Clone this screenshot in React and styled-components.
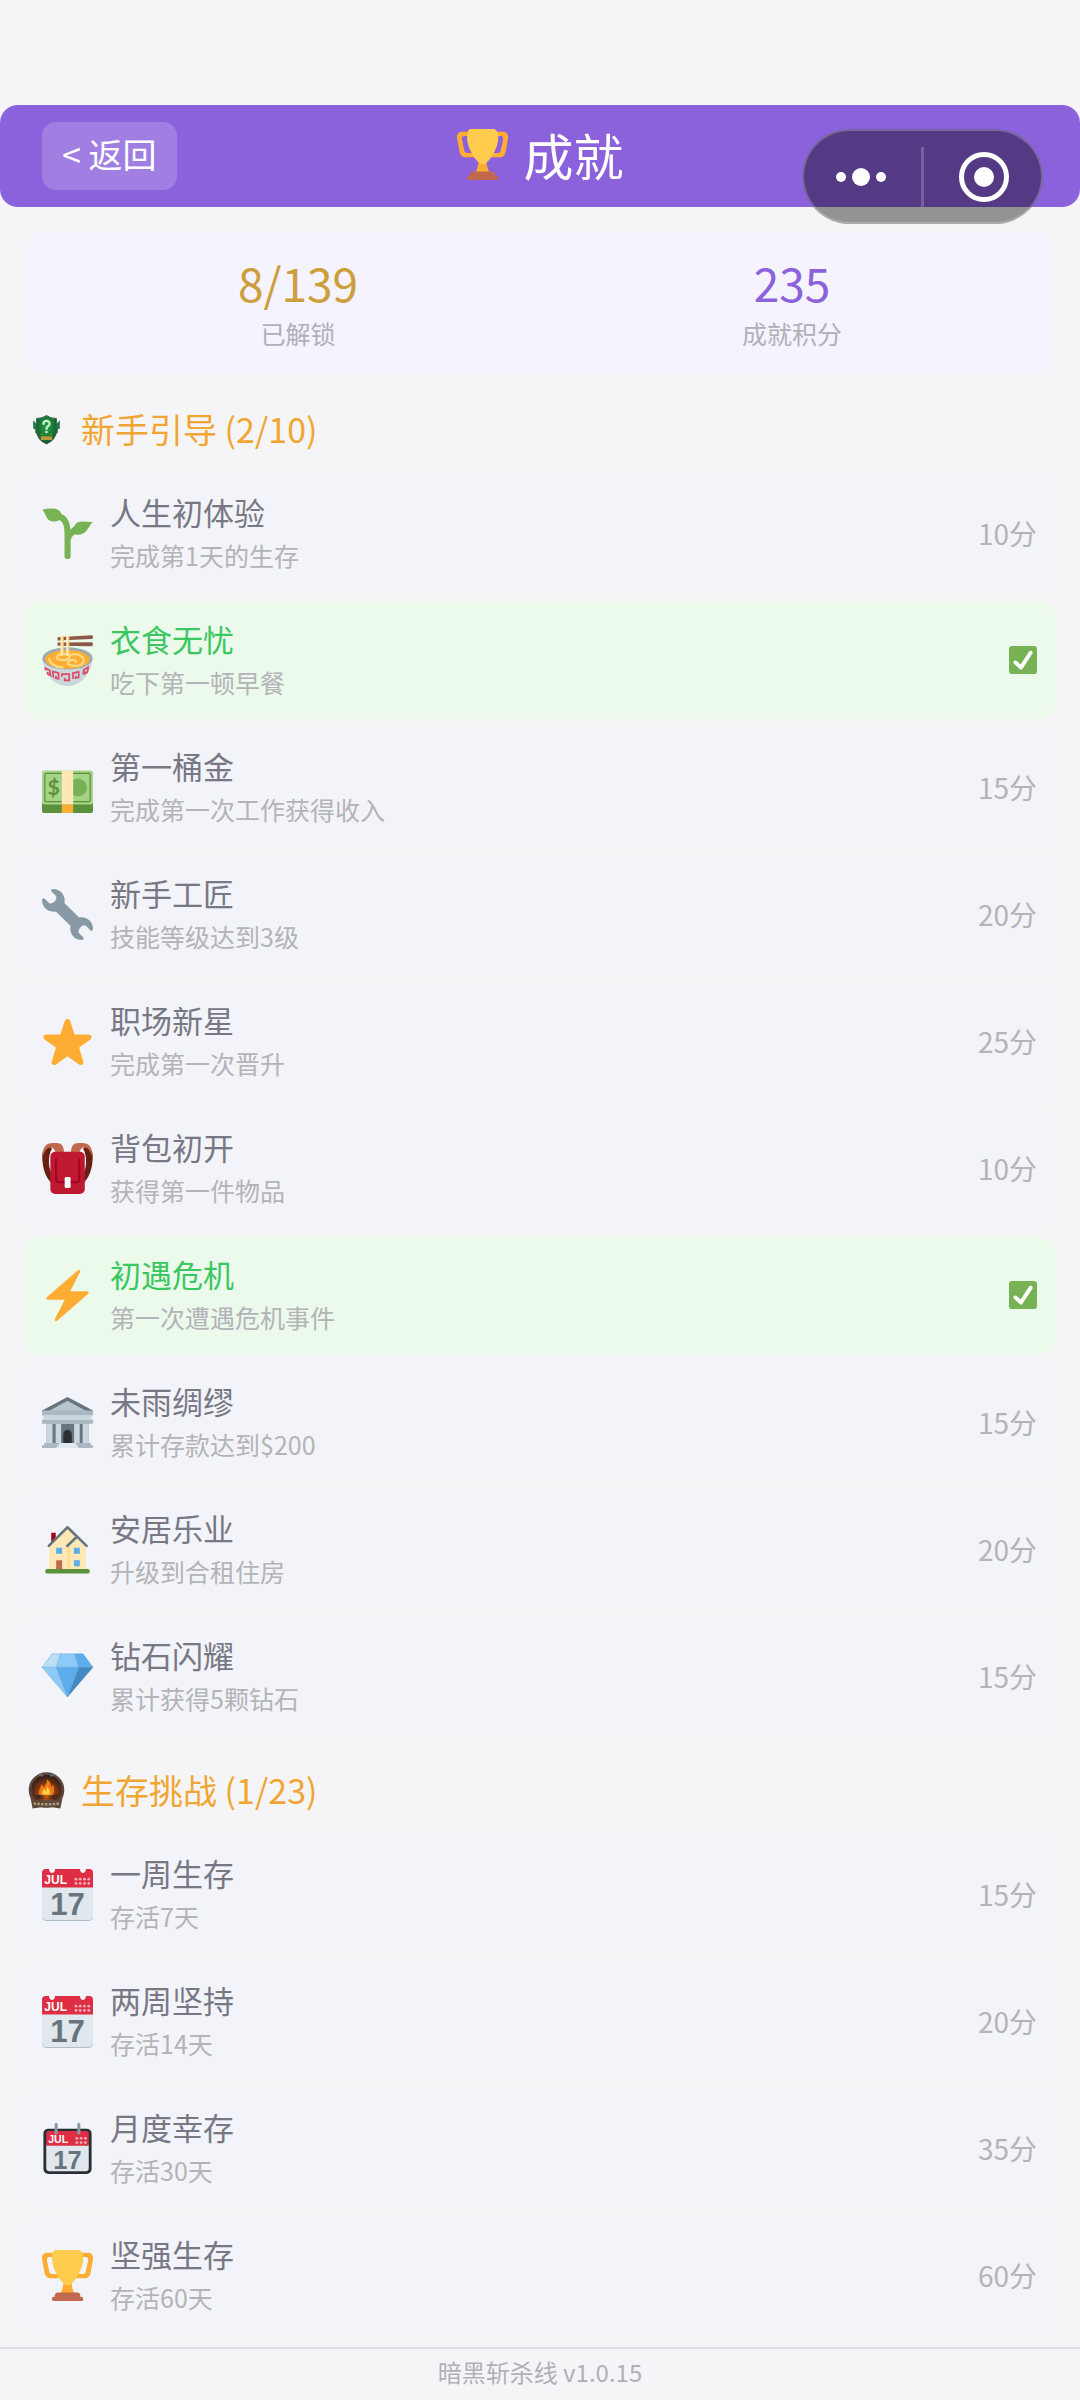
import styled, { createGlobalStyle } from "styled-components";

const GlobalStyle = createGlobalStyle`
	* {
		box-sizing: border-box;
	}
	body {
		margin: 0;
		background-color: #f5f5f7;
		font-family: "Noto Sans CJK SC", sans-serif;
	}
	h1, h2, h3, p, ul, dl, dd {
		margin: 0;
		padding: 0;
		font-weight: 400;
	}
	button {
		font: inherit;
		color: inherit;
		border: none;
		cursor: pointer;
	}
`;

const Page = styled.div`
	display: flex;
	flex-direction: column;
	min-height: 100vh;
	padding-top: 105px;
`;

const Header = styled.header`
	position: relative;
	display: grid;
	grid-template-columns: 1fr auto 1fr;
	align-items: center;
	height: 102px;
	padding: 0 42px;
	border-radius: 18px;
	background-color: #8c62dc;
	color: white;
`;

const BackButton = styled.button`
	justify-self: start;
	height: 68px;
	padding: 0 20px 4px;
	border-radius: 14px;
	background-color: rgba(255, 255, 255, 0.18);
	font-size: 34px;
	line-height: 64px;
	white-space: nowrap;
`;

const PageTitle = styled.h1`
	display: flex;
	align-items: center;
	gap: 16px;
	padding-bottom: 4px;
	font-size: 50px;
	line-height: 60px;
`;

const Capsule = styled.div`
	position: absolute;
	top: 24px;
	right: 37px;
	display: flex;
	gap: 3px;
	align-items: center;
	width: 241px;
	height: 95px;
	border: 2px solid rgba(255, 255, 255, 0.22);
	border-radius: 48px;
	background-color: rgba(0, 0, 0, 0.4);
`;

const CapsuleButton = styled.button`
	display: flex;
	flex: 1;
	justify-content: center;
	padding: 0;
	background: none;
`;

const CapsuleDivider = styled.span`
	width: 3px;
	height: 60px;
	background-color: rgba(255, 255, 255, 0.2);
`;

const Stats = styled.dl`
	display: flex;
	justify-content: space-around;
	margin: 25px 28px 0;
	padding: 18px 18px 22px;
	border-radius: 16px;
	background-color: #f5f3fd;
	text-align: center;
`;

const Stat = styled.div`
	display: flex;
	flex-direction: column-reverse;
`;

const StatValue = styled.dd`
	color: ${(props) => props.$color};
	font-size: 46px;
	line-height: 64px;
`;

const StatLabel = styled.dt`
	color: #b0b0b8;
	font-size: 25px;
	line-height: 38px;
`;

const Main = styled.main`
	flex: 1;
	padding: 0 24px;
`;

const SectionTitle = styled.h2`
	display: flex;
	align-items: center;
	gap: 16px;
	margin: 31px 4px 22px;
	color: #f1a533;
	font-size: 34px;
	line-height: 48px;
`;

const List = styled.ul`
	display: flex;
	flex-direction: column;
	gap: 10px;
	list-style: none;
`;

const Item = styled.li`
	display: flex;
	align-items: center;
	gap: 17px;
	padding: 15px 19px 16px 18px;
	border-radius: 16px;
	background-color: ${(props) => (props.$done ? "#ebfaeb" : "#f3f4f9")};
`;

const ItemText = styled.div`
	flex: 1;
`;

const ItemName = styled.h3`
	color: ${(props) => (props.$done ? "#3bc75f" : "#787885")};
	font-size: 31px;
	line-height: 44px;
`;

const ItemDesc = styled.p`
	color: #b3b3b8;
	font-size: 25px;
	line-height: 42px;
`;

const Points = styled.span`
	color: #b3b3b8;
	font-size: 28px;
	line-height: 40px;
`;

const Footer = styled.footer`
	padding-bottom: 5px;
	border-top: 2px solid #dcdce6;
	color: #b0b0b8;
	font-size: 24px;
	line-height: 46px;
	text-align: center;
`;

const Emoji = styled.svg.attrs({ viewBox: "0 0 36 36", "aria-hidden": true })`
	display: block;
	flex: none;
	width: ${(props) => props.$size || 51}px;
	height: ${(props) => props.$size || 51}px;
	overflow: visible;
`;

const CalendarText = styled.text`
	font-family: "Liberation Sans", sans-serif;
	font-weight: 700;
`;

const Trophy = () => (
	<Emoji>
		<path fill="#FFAC33" d="M5.123 5h6C12.227 5 13 4.896 13 6V4c0-1.104-.773-2-1.877-2h-8c-2 0-3.583 2.125-3 5 0 0 1.791 9.375 1.917 9.958C2.373 18.5 4.164 20 6.081 20h6.958c1.105 0-.039-1.896-.039-3v-2c0 1.104-.773 2-1.877 2h-4c-1.104 0-1.833-1.042-2-2S3.539 7.667 3.539 7.667C3.206 5.75 4.018 5 5.123 5zm25.812 0h-6C23.831 5 22 4.896 22 6V4c0-1.104 1.831-2 2.935-2h8c2 0 3.584 2.125 3 5 0 0-1.633 9.419-1.771 10-.354 1.5-2.042 3-4 3h-7.146C21.914 20 22 18.104 22 17v-2c0 1.104 1.831 2 2.935 2h4c1.104 0 1.834-1.042 2-2s1.584-7.333 1.584-7.333C32.851 5.75 32.04 5 30.935 5zM20.832 22c0-6.958-2.709 0-2.709 0s-3-6.958-3 0-3.291 10-3.291 10h12.292c-.001 0-3.292-3.042-3.292-10z" />
		<path fill="#FFCC4D" d="M29.123 6.577c0 6.775-6.77 18.423-11 18.423-4.231 0-11-11.648-11-18.423 0-5.577 1-6.577 3-6.577h15c1.999 0 3.998 1 4 6.577z" />
		<path fill="#C1694F" d="M27 33c0 1.104.227 2-.877 2h-16C9.018 35 9 34.104 9 33v-1c0-1.104 1.164-2 2.206-2h13.917c1.042 0 1.877.896 1.877 2v1z" />
		<path fill="#C1694F" d="M29 34.625c0 .76.165 1.375-1.252 1.375H8.498C7.206 36 7 35.385 7 34.625v-.25C7 33.615 7.738 33 8.498 33h19.25c.759 0 1.252.615 1.252 1.375v.25z" />
	</Emoji>
);

const Seedling = () => (
	<Emoji>
		<path fill="#77B255" d="M0.2 1.2C3 .3 6 .2 8.600 .4c2.800.3 4.600 2 5.300 4 3.600 1.200 5.800 5.400 6.200 11 .7-1 1.600-1.900 2.700-2.600.7-2 2.500-3.200 5.200-3.300 2.600 0 5.200.6 7.800.4-1.600 1.600-2.600 3.800-4.200 5.800-2 2.700-5.200 3.900-8.400 2.800-1.700 1-2.700 2.700-3 4.700V34.500c0 1.900-4.300 1.900-4.300 0V18c0-5-1-8.600-3.800-9.600-2 1.500-5.300 1.700-7.500-.1C2.900 6.900 2.300 3.300.2 1.200z" />
	</Emoji>
);

const Noodles = () => (
	<Emoji>
		<path fill="#CCD6DD" d="M.6 16h34.800c0 5-1.800 10-4.800 13.600C27.500 34 23 36 18 36S8.500 34 5.400 29.600C2.400 26 .6 21 .6 16z" />
		<g fill="none" stroke="#DD4B65" strokeWidth="1.200">
			<path d="M2.600 25l-.2-1.600 3 1.500.6 3.600-2-1v-1.400M8 30l-.4-4.200 4 1 .2 4-2-.3v-1.700M14 29.500v-1.900h5.200v4.400h-3.200v-1.900M22 31l-.2-4 4-1 .2 3.800-2.200.6v-1.600M29 27.800l.6-3.400 3-1.600-.6 3.400-1.800 1v-1.600" />
		</g>
		<ellipse cx="18" cy="16.500" rx="17.800" ry="7.800" fill="#99AAB5" />
		<ellipse cx="18" cy="17.200" rx="15.800" ry="6.600" fill="#FFAC33" />
		<g fill="none" stroke="#FFD983" strokeWidth="1.600" strokeLinecap="round">
			<path d="M5 17c1 3.500 5 5.500 9.500 5.800M10.500 16c.5-2 3-3 6.500-2.500 4 .5 3 4.200-2 4.200-3 0-5-1-4.500-1.700M27 14.500c4 2.500 3 7-3 7.300-5 .2-7-1.800-5-3.300 2-1.400 5-1 5 .5M19 14.500c3-1.200 6-1.300 8 0" />
		</g>
		<path fill="#8F5747" d="M11 1.600L35 .1c1.300 0 1.300 2.700 0 2.800L11 3.800zM11 5.300l24-.2c1.300 0 1.300 2.800 0 2.800l-24-.3z" />
		<path fill="none" stroke="#FFE8B6" strokeWidth="1.900" strokeLinecap="round" d="M14 1.500V14M18 1.200V14" />
		<path fill="none" stroke="#F4C968" strokeWidth=".5" d="M15.100 1v13M19.100 1v13" />
	</Emoji>
);

const Money = () => (
	<Emoji>
		<rect y="16" width="36" height="20" rx="1.800" fill="#5C913B" />
		<rect y="6" width="36" height="24" rx="1.800" fill="#A6D388" />
		<rect x="2" y="8" width="32" height="20" rx="1" fill="none" stroke="#5C913B" strokeWidth=".9" />
		<circle cx="25.500" cy="18" r="6.300" fill="#77B255" />
		<text x="8.200" y="23.200" textAnchor="middle" fontFamily="Lato, sans-serif" fontWeight="700" fontSize="15" fill="#5C913B">$</text>
		<path fill="#FFE8B6" d="M14 6h8v24h-8z" />
		<path fill="#FFAC33" d="M14 30h8v6h-8z" />
	</Emoji>
);

const Wrench = () => (
	<Emoji>
		<path fill="#8899A6" d="M27.989 19.977c-.622 0-1.225.078-1.806.213L15.811 9.818c.134-.581.212-1.184.212-1.806C16.023 3.587 12.436 0 8.012 0 7.11 0 5.91.916 6.909 1.915l2.997 2.997s.999 1.998-.999 3.995-3.996.998-3.996.998L1.915 6.909C.916 5.91 0 7.105 0 8.012c0 4.425 3.587 8.012 8.012 8.012.622 0 1.225-.078 1.806-.212l10.371 10.371c-.135.581-.213 1.184-.213 1.806 0 4.425 3.588 8.011 8.012 8.011.901 0 2.101-.916 1.102-1.915l-2.997-2.997s-.999-1.998.999-3.995 3.995-.999 3.995-.999l2.997 2.997c1 .999 1.916-.196 1.916-1.102 0-4.425-3.587-8.012-8.011-8.012z" />
	</Emoji>
);

const Star = () => (
	<Emoji>
		<path fill="#FFAC33" d="M27.287 34.627c-.404 0-.806-.124-1.152-.371L18 28.422l-8.135 5.834c-.343.247-.743.371-1.147.371-.405 0-.81-.125-1.157-.376-.688-.498-.978-1.379-.721-2.187l3.034-9.792-8.062-5.681c-.685-.505-.97-1.393-.708-2.199.264-.808 1.016-1.357 1.864-1.363L12.947 13l3.179-9.549c.268-.809 1.023-1.353 1.874-1.353.851 0 1.606.545 1.875 1.353L23 13l10.036.015c.853.006 1.606.556 1.867 1.363.263.808-.022 1.694-.708 2.199l-8.062 5.681 3.034 9.792c.26.808-.03 1.689-.716 2.187-.345.251-.752.376-1.164.376z" />
	</Emoji>
);

const Backpack = () => (
	<Emoji>
		<path fill="#662113" d="M5 2C1 3 0 7 .2 11 .6 19 3 25 6.500 28V21C4.500 17 4 9 7 4zM31 2c4 1 5 5 4.800 9-.4 8-2.800 14-6.300 17v-7c2-4 2.500-12-.5-17z" />
		<path fill="#C1694F" d="M.2 10C.2 3 3 0 7.500 0h3c3 0 5 2 5 6.500h-6C9 4.500 8 3.200 6 3.200 3.500 3.200 2 5.500.2 10zM35.800 10C35.800 3 33 0 28.500 0h-3c-3 0-5 2-5 6.500h6c.5-2 1.500-3.300 3.500-3.300 2.500 0 4 2.300 5.800 6.800z" />
		<rect x="5.900" y="6.200" width="24.300" height="29.800" rx="3.400" fill="#BE1931" />
		<path fill="none" stroke="#A0041E" strokeWidth="1.400" strokeLinecap="round" d="M9.900 11.500V25.200q0 2.500 2.500 2.500h11.400q2.500 0 2.500-2.500V11.500" />
		<rect x="16" y="24" width="4.200" height="7.800" rx="1" fill="#F5F8FA" />
	</Emoji>
);

const Lightning = () => (
	<Emoji>
		<path fill="#FFAC33" d="M32.938 15.651C32.792 15.26 32.418 15 32 15H19.925L26.89 1.458c.219-.426.106-.947-.271-1.243C26.437.071 26.218 0 26 0c-.233 0-.466.082-.653.243L18 6.588 3.347 19.243c-.316.273-.43.714-.284 1.105S3.582 21 4 21h12.075L9.11 34.542c-.219.426-.106.947.271 1.243.182.144.401.215.619.215.233 0 .466-.082.653-.243L18 29.412l14.653-12.655c.317-.273.43-.714.285-1.106z" />
	</Emoji>
);

const Bank = () => (
	<Emoji>
		<path fill="#AAB8C2" d="M3 18h30v16H3z" />
		<path fill="#66757F" d="M7.500 19h2.200v14H7.500zM26.500 19h2.200v14h-2.200zM13 19h10v14H13z" />
		<path fill="#CCD6DD" d="M3.200 19h4v14h-4zM9.700 19h3.800v14H9.700zM22.700 19h3.800v14h-3.800zM28.800 19h4v14h-4z" />
		<path fill="#292F33" d="M15 33v-6.500c0-4.500 6-4.500 6 0V33z" />
		<path fill="#66757F" d="M18 0l18 9.500v1H0v-1z" />
		<path fill="#B8C5CE" d="M18 2.600L31.500 10h-27z" />
		<path fill="#AAB8C2" d="M0 9.500h36V13H0zM0 16h36v2.800H0z" />
		<path fill="#CCD6DD" d="M1 13h34v3.200H1z" />
		<path fill="#AAB8C2" d="M1.500 32.500h33V34h-33zM0 34h36v2H0z" />
		<path fill="#E1E8ED" d="M12.500 32.500h11L26 36H10z" />
	</Emoji>
);

const House = () => (
	<Emoji>
		<path fill="#A0041E" d="M6.500 6.200h3.200v7H6.500z" />
		<path fill="#FFE8B6" d="M5 15L18 2.500 31 15v17H5z" />
		<path fill="#FFD983" d="M18 16l1.400-1v17H18z" />
		<path fill="none" stroke="#66757F" strokeWidth="1.800" strokeLinecap="round" strokeLinejoin="round" d="M4.800 15.500L18 2.300l13.500 13.200M17.800 15.500l6.600-6.300" />
		<path fill="#5DADEC" d="M10 16.800h4.200V21H10zM22.500 16.800h4.200V21h-4.200zM22.500 25.600h4.200v4.200h-4.200z" />
		<path fill="#C1694F" d="M10 25.600h4.200V32H10z" />
		<rect x="2.300" y="31.800" width="31.400" height="3.200" rx="1.400" fill="#5C913B" />
	</Emoji>
);

const Gem = () => (
	<Emoji>
		<path fill="#BDDDF4" d="M7 2h6l-3 9.500H0z" />
		<path fill="#8CCAF7" d="M13 2h10l3 9.500H10zM0 11.500h10l8 21z" />
		<path fill="#5DADEC" d="M23 2h6l7 9.500H26zM10 11.500h16l-8 21z" />
		<path fill="#4289C1" d="M26 11.500h10l-18 21z" />
		<path fill="none" stroke="#4289C1" strokeOpacity=".45" strokeWidth=".5" d="M7 2h22l7 9.500-18 21-18-21zM0 11.500h36M13 2l-3 9.500 8 21 8-21L23 2" />
	</Emoji>
);

const CalendarDots = ({ x, y, cols, step }) =>
	Array.from({ length: cols * 2 }, (_, i) => (
		<circle
			key={i}
			cx={x + (i % cols) * step}
			cy={y + Math.floor(i / cols) * step}
			r="1"
			fill="#F4ABBA"
		/>
	));

const Calendar = () => (
	<Emoji>
		<rect y="20" width="36" height="16.500" rx="3" fill="#99AAB5" />
		<path fill="#E1E8ED" d="M0 12h36v21c0 2-1 3-3 3H3c-2 0-3-1-3-3z" />
		<path fill="#DD2E44" d="M2.500 0H5c0 3.800 4.200 3.800 4.200 0h17.600c0 3.800 4.200 3.800 4.200 0h2.500C35 0 36 1 36 2.500V13H0V2.500C0 1 1 0 2.500 0z" />
		<CalendarText x="1.600" y="10.600" fontSize="8.500" fill="#fff">JUL</CalendarText>
		<CalendarDots x={24} y={7.2} cols={4} step={3} />
		<CalendarText x="18" y="32.800" fontSize="22" textAnchor="middle" fill="#66757F">17</CalendarText>
	</Emoji>
);

const TearOffCalendar = () => (
	<Emoji>
		<rect x="1" y="4" width="34" height="32" rx="3.500" fill="#292F33" />
		<path fill="#E1E8ED" d="M3 15h30v17c0 1.300-.7 2-2 2H5c-1.300 0-2-.7-2-2z" />
		<path fill="#DD2E44" d="M5 5.600h26c1.300 0 2 .7 2 2V16H3V7.600c0-1.300.7-2 2-2z" />
		<path stroke="#8899A6" strokeWidth="2.200" strokeLinecap="round" d="M10 1v6M26 1v6" />
		<CalendarText x="4.400" y="13.800" fontSize="7.500" fill="#fff">JUL</CalendarText>
		<CalendarDots x={24.6} y={10.8} cols={3} step={3} />
		<CalendarText x="18" y="32.400" fontSize="18" textAnchor="middle" fill="#66757F">17</CalendarText>
	</Emoji>
);

const CheckBadge = () => (
	<Emoji $size={28} role="img" aria-hidden={false} aria-label="已完成">
		<rect width="36" height="36" rx="4" fill="#77B255" />
		<path fill="#fff" d="M29.28 6.362c-1.156-.751-2.704-.422-3.458.736L14.936 23.877l-5.029-4.65c-1.014-.938-2.596-.875-3.533.138-.937 1.014-.875 2.596.139 3.533l7.209 6.666c.48.445 1.09.665 1.696.665.673 0 1.534-.282 2.099-1.139.332-.506 12.5-19.27 12.5-19.27.751-1.159.421-2.707-.737-3.458z" />
	</Emoji>
);

const GuideBadge = () => (
	<Emoji $size={37}>
		<defs>
			<radialGradient id="shield" cx=".5" cy=".4" r=".6">
				<stop offset="0" stopColor="#2f9a52" />
				<stop offset=".6" stopColor="#187a36" />
				<stop offset="1" stopColor="#0f5a2c" />
			</radialGradient>
		</defs>
		<path fill="#2c7a4c" d="M5 9l5 5-1 9-2-2v-3l-2-1v-4zM31 9l-5 5 1 9 2-2v-3l2-1v-4z" />
		<path fill="url(#shield)" stroke="#2b5c42" strokeWidth="1" d="M18 4.500c3 2 6 2.600 9.500 2.900V19c0 6-4 10.500-9.500 13-5.500-2.500-9.500-7-9.500-13V7.400C12 7.100 15 6.500 18 4.500z" />
		<path fill="none" stroke="#c7f5c6" strokeWidth="2.200" strokeLinecap="round" d="M15 12.600c.3-4 6.200-3.700 6 0-.2 2.200-3 2.300-3 4.800" />
		<circle cx="18" cy="20.400" r="1.300" fill="#c7f5c6" />
		<path fill="#b49a3c" d="M12.500 24.500h11v3.600h-11zM13 22l2 1.400h-2zM23 22l-2 1.400h2z" />
	</Emoji>
);

const CampfireBadge = () => (
	<Emoji $size={37}>
		<defs>
			<radialGradient id="glow" cx=".5" cy=".6" r=".55">
				<stop offset="0" stopColor="#e8701a" />
				<stop offset=".5" stopColor="#843a14" />
				<stop offset="1" stopColor="#2e1b15" />
			</radialGradient>
		</defs>
		<circle cx="18" cy="17.500" r="16" fill="url(#glow)" stroke="#5c4740" strokeWidth="2.600" />
		<path fill="#6b6f75" d="M11 1.600l4 1.300-1 1.800-4-1.200zM25 1.600l-4 1.300 1 1.800 4-1.200z" />
		<path fill="#f47b12" d="M11 22c-1-5 1.500-6 2-10 2 1 2 3 2.500 4 .5-4 3.500-5 3-9 4 3 3.500 6 4 8 1-.5 1-2 1.500-3 2 4 2 8-1 11z" />
		<path fill="#ffcf4a" d="M14 22c-.8-3 1-4 1.700-6 1 1 1.200 2 1.300 3 .8-1.500 1.500-3 1.500-5 2.500 2.500 4 5.500 2.500 8z" />
		<path fill="#3e2a20" d="M7 22l22 3v2L7 24zM29 22L7 25v2l22-3z" />
		<path fill="#5b4a3c" d="M2.500 25.500c10 3 21 3 31 0l-2 10c-8-1.500-19-1.500-27 0z" />
		<path fill="none" stroke="#b39c78" strokeWidth="2.400" strokeDasharray="2.400 1.300" d="M5.500 30.500c8 1.300 17 1.300 25 0" />
	</Emoji>
);

const sections = [
	{
		title: "新手引导 (2/10)",
		Badge: GuideBadge,
		items: [
			{ Icon: Seedling, name: "人生初体验", desc: "完成第1天的生存", points: 10 },
			{ Icon: Noodles, name: "衣食无忧", desc: "吃下第一顿早餐", done: true },
			{ Icon: Money, name: "第一桶金", desc: "完成第一次工作获得收入", points: 15 },
			{ Icon: Wrench, name: "新手工匠", desc: "技能等级达到3级", points: 20 },
			{ Icon: Star, name: "职场新星", desc: "完成第一次晋升", points: 25 },
			{ Icon: Backpack, name: "背包初开", desc: "获得第一件物品", points: 10 },
			{ Icon: Lightning, name: "初遇危机", desc: "第一次遭遇危机事件", done: true },
			{ Icon: Bank, name: "未雨绸缪", desc: "累计存款达到$200", points: 15 },
			{ Icon: House, name: "安居乐业", desc: "升级到合租住房", points: 20 },
			{ Icon: Gem, name: "钻石闪耀", desc: "累计获得5颗钻石", points: 15 },
		],
	},
	{
		title: "生存挑战 (1/23)",
		Badge: CampfireBadge,
		items: [
			{ Icon: Calendar, name: "一周生存", desc: "存活7天", points: 15 },
			{ Icon: Calendar, name: "两周坚持", desc: "存活14天", points: 20 },
			{ Icon: TearOffCalendar, name: "月度幸存", desc: "存活30天", points: 35 },
			{ Icon: Trophy, name: "坚强生存", desc: "存活60天", points: 60 },
		],
	},
];

function Achievement({ Icon, name, desc, points, done }) {
	return (
		<Item $done={done}>
			<Icon />
			<ItemText>
				<ItemName $done={done}>{name}</ItemName>
				<ItemDesc>{desc}</ItemDesc>
			</ItemText>
			{done ? <CheckBadge /> : <Points>{points}分</Points>}
		</Item>
	);
}

export default function App() {
	return (
		<Page>
			<GlobalStyle />
			<Header>
				<BackButton type="button">&lt; 返回</BackButton>
				<PageTitle>
					<Trophy />
					成就
				</PageTitle>
				<Capsule>
					<CapsuleButton type="button" aria-label="更多">
						<svg width="50" height="50" viewBox="0 0 50 50" fill="#fff">
							<circle cx="5" cy="25" r="5" />
							<circle cx="25" cy="25" r="9" />
							<circle cx="45" cy="25" r="5" />
						</svg>
					</CapsuleButton>
					<CapsuleDivider />
					<CapsuleButton type="button" aria-label="关闭">
						<svg width="50" height="50" viewBox="0 0 50 50">
							<circle cx="25" cy="25" r="22.500" fill="none" stroke="#fff" strokeWidth="5" />
							<circle cx="25" cy="25" r="10" fill="#fff" />
						</svg>
					</CapsuleButton>
				</Capsule>
			</Header>
			<Stats>
				<Stat>
					<StatLabel>已解锁</StatLabel>
					<StatValue $color="#cd9f3c">8/139</StatValue>
				</Stat>
				<Stat>
					<StatLabel>成就积分</StatLabel>
					<StatValue $color="#8c62dc">235</StatValue>
				</Stat>
			</Stats>
			<Main>
				{sections.map(({ title, Badge, items }) => (
					<section key={title}>
						<SectionTitle>
							<Badge />
							{title}
						</SectionTitle>
						<List>
							{items.map((item) => (
								<Achievement key={item.name} {...item} />
							))}
						</List>
					</section>
				))}
			</Main>
			<Footer>暗黑斩杀线 v1.0.15</Footer>
		</Page>
	);
}
